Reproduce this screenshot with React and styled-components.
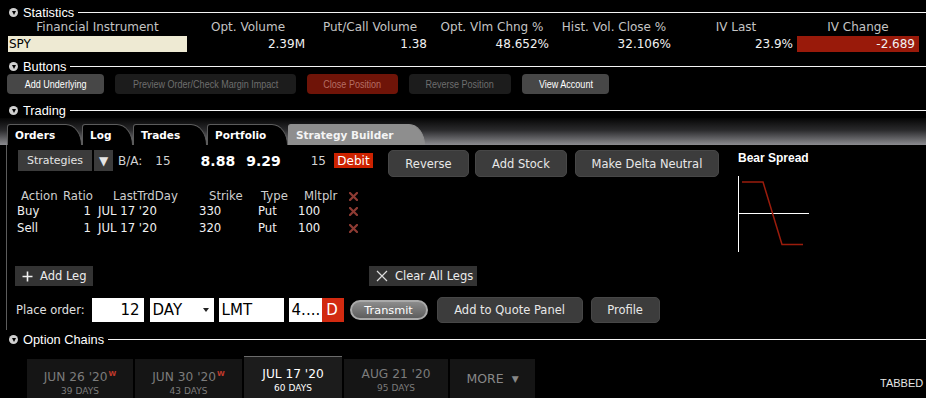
import React from 'react';
import styled, { createGlobalStyle } from 'styled-components';

const GlobalStyle = createGlobalStyle`
  html, body {
    margin: 0;
    padding: 0;
    background: #000;
    overflow: hidden;
  }
  body {
    font-family: "DejaVu Sans", sans-serif;
    color: #eee;
  }
`;

const Page = styled.div`
  width: 926px;
  height: 398px;
  padding-top: 4px;
  box-sizing: border-box;
  overflow: hidden;
  background: #000;
`;

/* ---------- section headers ---------- */

const SectionHead = styled.div`
  display: flex;
  align-items: center;
  height: 16px;
  padding-left: 9px;
  margin-top: ${p => p.$top || 0}px;
`;

const Toggle = styled.span`
  flex: none;
  width: 9px;
  height: 9px;
  border-radius: 50%;
  background: #d0d0d0;
  margin-right: 5px;
  display: flex;
  align-items: center;
  justify-content: center;
  &::after {
    content: '';
    margin-top: 1px;
    border-left: 2.5px solid transparent;
    border-right: 2.5px solid transparent;
    border-top: 4px solid #000;
  }
`;

const SectionTitle = styled.span`
  font-family: "Liberation Sans", sans-serif;
  font-size: 12.8px;
  color: #fff;
  margin-right: 4px;
  white-space: nowrap;
`;

const Rule = styled.span`
  flex: 1;
  height: 1px;
  background: #f4f4f4;
`;

function Section({ title, top }) {
  return (
    <SectionHead $top={top}>
      <Toggle />
      <SectionTitle>{title}</SectionTitle>
      <Rule />
    </SectionHead>
  );
}

/* ---------- statistics ---------- */

const StatsGrid = styled.div`
  display: grid;
  grid-template-columns: 179px repeat(6, 122px);
  margin-left: 8px;
  font-size: 12px;
`;

const StatHead = styled.div`
  height: 15px;
  line-height: 15px;
  text-align: center;
  color: #c4c4c4;
  white-space: nowrap;
`;

const StatVal = styled.div`
  height: 16px;
  line-height: 16px;
  margin-top: 1px;
  padding: 0 4px 0 1px;
  text-align: ${p => (p.$left ? 'left' : 'right')};
  background: ${p => p.$bg || 'transparent'};
  color: ${p => p.$color || '#f2f2f2'};
  white-space: nowrap;
`;

/* ---------- buttons row ---------- */

const ButtonRow = styled.div`
  display: flex;
  gap: 11px;
  height: 20px;
  margin-left: 7px;
`;

const SmallButton = styled.div`
  box-sizing: border-box;
  width: ${p => p.$w}px;
  height: 20px;
  border-radius: 4px;
  display: flex;
  align-items: center;
  justify-content: center;
  white-space: nowrap;
  background: ${p => (p.$tone === 'on' ? '#474747' : p.$tone === 'red' ? '#6f1408' : '#1c1c1c')};
  color: ${p => (p.$tone === 'on' ? '#fff' : p.$tone === 'red' ? '#b56e64' : '#6e6e6e')};
`;

/* the panel font is a condensed face: squeeze a regular one */
const Condensed = styled.span`
  display: inline-block;
  font-family: "Liberation Sans", sans-serif;
  font-size: 11px;
  transform: scaleX(0.82);
`;

/* ---------- trading tabs ---------- */

const TabBar = styled.div`
  height: 27px;
  padding-left: 7px;
  display: flex;
  align-items: flex-end;
  background: linear-gradient(to bottom, #050505 0%, #2a2a2c 45%, #8c8c90 100%);
`;

const TradeTab = styled.div`
  box-sizing: border-box;
  width: ${p => p.$w}px;
  height: 21px;
  padding-left: 7px;
  display: flex;
  align-items: center;
  font-weight: bold;
  font-size: 10.5px;
  white-space: nowrap;
  color: ${p => (p.$active ? '#f4f4f4' : '#fff')};
  background: ${p => (p.$active ? '#8e8e8e' : '#000')};
  border: 1px solid ${p => (p.$active ? '#8e8e8e' : '#5c5c5c')};
  border-bottom: none;
  border-radius: 3px 16px 0 0 / 3px 21px 0 0;
`;

/* ---------- trading panel ---------- */

const Panel = styled.div`
  box-sizing: border-box;
  height: 185px;
  margin-left: 6px;
  border-left: 1px solid #5c5c5c;
  padding: 5px 0 0 11px;
  display: flex;
`;

const Main = styled.div`
  width: 709px;
  display: flex;
  flex-direction: column;
`;

const StrategyRow = styled.div`
  display: flex;
  align-items: flex-start;
  height: 27px;
`;

const QuoteGroup = styled.div`
  display: flex;
  align-items: center;
  height: 21px;
`;

const DarkBox = styled.div`
  box-sizing: border-box;
  width: ${p => p.$w}px;
  height: 21px;
  margin-left: ${p => p.$ml || 0}px;
  background: #3b3b3b;
  color: #e4e4e4;
  font-size: ${p => p.$fs || 11}px;
  display: flex;
  align-items: center;
  justify-content: center;
`;

const Quote = styled.span`
  margin-left: ${p => p.$ml || 0}px;
  font-size: ${p => (p.$big ? 14 : 12)}px;
  font-weight: ${p => (p.$big ? 'bold' : 'normal')};
  color: ${p => (p.$big ? '#fff' : '#d2d2d2')};
  white-space: nowrap;
`;

const DebitTag = styled.span`
  margin-left: 8px;
  width: 39px;
  height: 15px;
  background: #cc2200;
  color: #fff;
  font-size: 12px;
  display: flex;
  align-items: center;
  justify-content: center;
`;

const ActionButton = styled.div`
  box-sizing: border-box;
  width: ${p => p.$w}px;
  height: ${p => p.$h || 27}px;
  margin-left: ${p => p.$ml || 0}px;
  border-radius: 5px;
  background: #3c3c3c;
  border: 1px solid #474747;
  color: #e8e8e8;
  font-size: 11.5px;
  display: flex;
  align-items: center;
  justify-content: center;
  white-space: nowrap;
`;

const LegsGrid = styled.div`
  display: grid;
  grid-template-columns: 46px 32px 101px 59px 40px 52px 14px;
  grid-template-rows: 14px 17px 17px;
  margin: 12px 0 0 -1px;
  font-size: 11.7px;
  color: #f0f0f0;
`;

const LegHead = styled.div`
  line-height: 14px;
  padding-left: ${p => p.$pl || 0}px;
  color: #cfcfcf;
  white-space: nowrap;
  display: flex;
  align-items: center;
`;

const LegCell = styled.div`
  line-height: 17px;
  padding-left: ${p => p.$pl || 0}px;
  padding-right: ${p => p.$pr || 0}px;
  white-space: nowrap;
  display: flex;
  align-items: center;
  justify-content: ${p => (p.$right ? 'flex-end' : 'flex-start')};
`;

const RemoveX = () => (
  <svg width="9" height="9" viewBox="0 0 9 9">
    <path d="M1 1L8 8M8 1L1 8" stroke="#8e3b33" strokeWidth="2.2" strokeLinecap="square" />
  </svg>
);

const LegButtons = styled.div`
  display: flex;
  height: 20px;
  margin: 29px 0 0 -3px;
`;

const LegButton = styled.div`
  box-sizing: border-box;
  width: ${p => p.$w}px;
  height: 20px;
  margin-left: ${p => p.$ml || 0}px;
  background: #333;
  color: #ececec;
  font-size: 11.5px;
  display: flex;
  align-items: center;
  padding-left: 7px;
  gap: 7px;
  white-space: nowrap;
`;

const OrderRow = styled.div`
  display: flex;
  align-items: center;
  height: 26px;
  margin: 11px 0 0 -2px;
`;

const OrderLabel = styled.span`
  font-size: 11.5px;
  color: #e0e0e0;
  margin-right: 7px;
  white-space: nowrap;
`;

const Field = styled.div`
  box-sizing: border-box;
  position: relative;
  width: ${p => p.$w}px;
  height: 24px;
  margin-left: ${p => p.$ml || 0}px;
  background: ${p => p.$bg || '#fff'};
  color: ${p => p.$color || '#000'};
  font-size: 15px;
  display: flex;
  align-items: center;
  justify-content: ${p => (p.$align === 'right' ? 'flex-end' : p.$align === 'center' ? 'center' : 'flex-start')};
  padding: 0 4px 0 3px;
  white-space: nowrap;
  overflow: hidden;
`;

const Caret = styled.span`
  position: absolute;
  right: 5px;
  top: 10px;
  border-left: 3px solid transparent;
  border-right: 3px solid transparent;
  border-top: 4px solid #222;
`;

const Transmit = styled.div`
  box-sizing: border-box;
  width: 78px;
  height: 20px;
  margin-left: 6px;
  border-radius: 10px;
  border: 2px solid #a9a9a9;
  background: linear-gradient(to bottom, #8c8c8c, #5d5d5d);
  color: #fff;
  font-size: 11.3px;
  display: flex;
  align-items: center;
  justify-content: center;
`;

const ChartCol = styled.div`
  padding-top: 1px;
  margin-left: 11px;
  display: flex;
  flex-direction: column;
`;

const ChartTitle = styled.div`
  font-family: "Liberation Sans", sans-serif;
  font-weight: bold;
  font-size: 12px;
  line-height: 14px;
  color: #fff;
  white-space: nowrap;
`;

const ChartBox = styled.svg`
  margin-top: 11px;
`;

/* ---------- option chains ---------- */

const ChainRow = styled.div`
  display: flex;
  align-items: flex-end;
  height: 42px;
  margin: 9px 0 0 27px;
`;

const ChainTab = styled.div`
  box-sizing: border-box;
  width: ${p => p.$w}px;
  height: ${p => (p.$active ? 42 : 39)}px;
  margin-right: 2px;
  background: ${p => (p.$active ? '#1c1c1c' : '#151515')};
  border-top: ${p => (p.$active ? '1px solid #6c6c6c' : 'none')};
  padding-top: ${p => (p.$active ? 10 : 8)}px;
  display: flex;
  flex-direction: column;
  align-items: center;
  color: ${p => (p.$active ? '#fff' : '#7c7c7c')};
`;

const ChainDate = styled.div`
  font-size: 12.2px;
  line-height: 14px;
  white-space: nowrap;
`;

const WeeklyMark = styled.sup`
  font-size: 7px;
  font-weight: bold;
  color: #c0392b;
  vertical-align: 5px;
  margin-left: 1px;
`;

const ChainDays = styled.div`
  font-size: 9px;
  line-height: 11px;
  margin-top: 2px;
  white-space: nowrap;
`;

const MoreTab = styled.div`
  box-sizing: border-box;
  width: 85px;
  height: 39px;
  background: #151515;
  color: #888;
  font-size: 12.5px;
  display: flex;
  align-items: center;
  justify-content: center;
  gap: 8px;
`;

const Tabbed = styled.div`
  margin-left: auto;
  align-self: flex-start;
  margin-top: 21px;
  width: 46px;
  overflow: hidden;
  white-space: nowrap;
  font-family: "Liberation Sans", sans-serif;
  font-size: 11px;
  line-height: 12px;
  color: #e6e6e6;
`;

const stats = [
  ['Financial Instrument', 'SPY'],
  ['Opt. Volume', '2.39M'],
  ['Put/Call Volume', '1.38'],
  ['Opt. Vlm Chng %', '48.652%'],
  ['Hist. Vol. Close %', '32.106%'],
  ['IV Last', '23.9%'],
  ['IV Change', '-2.689'],
];

const legs = [
  ['Buy', '1', "JUL 17 '20", '330', 'Put', '100'],
  ['Sell', '1', "JUL 17 '20", '320', 'Put', '100'],
];

const chains = [
  { date: "JUN 26 '20", days: '39 DAYS', weekly: true, w: 106 },
  { date: "JUN 30 '20", days: '43 DAYS', weekly: true, w: 107 },
  { date: "JUL 17 '20", days: '60 DAYS', active: true, w: 98 },
  { date: "AUG 21 '20", days: '95 DAYS', w: 104 },
];

export default function App() {
  return (
    <Page>
      <GlobalStyle />
      <Section title="Statistics" />
      <StatsGrid>
        {stats.map(([h]) => (
          <StatHead key={h}>{h}</StatHead>
        ))}
        {stats.map(([h, v], i) => (
          <StatVal
            key={h + v}
            $left={i === 0}
            $bg={i === 0 ? '#eeead3' : i === 6 ? '#991a0a' : undefined}
            $color={i === 0 ? '#000' : undefined}
          >
            {v}
          </StatVal>
        ))}
      </StatsGrid>

      <Section title="Buttons" top={6} />
      <ButtonRow>
        <SmallButton $w={97} $tone="on"><Condensed>Add Underlying</Condensed></SmallButton>
        <SmallButton $w={181}><Condensed>Preview Order/Check Margin Impact</Condensed></SmallButton>
        <SmallButton $w={91} $tone="red"><Condensed>Close Position</Condensed></SmallButton>
        <SmallButton $w={102}><Condensed>Reverse Position</Condensed></SmallButton>
        <SmallButton $w={87} $tone="on"><Condensed>View Account</Condensed></SmallButton>
      </ButtonRow>

      <Section title="Trading" top={8} />
      <TabBar>
        <TradeTab $w={75}>Orders</TradeTab>
        <TradeTab $w={51}>Log</TradeTab>
        <TradeTab $w={74}>Trades</TradeTab>
        <TradeTab $w={81}>Portfolio</TradeTab>
        <TradeTab $w={137} $active>Strategy Builder</TradeTab>
      </TabBar>

      <Panel>
        <Main>
          <StrategyRow>
            <QuoteGroup>
              <DarkBox $w={74}>Strategies</DarkBox>
              <DarkBox $w={19} $ml={2} $fs={12}>▼</DarkBox>
              <Quote $ml={5}>B/A:</Quote>
              <Quote $ml={13}>15</Quote>
              <Quote $ml={30} $big>8.88</Quote>
              <Quote $ml={11} $big>9.29</Quote>
              <Quote $ml={30}>15</Quote>
              <DebitTag>Debit</DebitTag>
            </QuoteGroup>
            <ActionButton $w={81} $ml={15}>Reverse</ActionButton>
            <ActionButton $w={92} $ml={6}>Add Stock</ActionButton>
            <ActionButton $w={144} $ml={8}>Make Delta Neutral</ActionButton>
          </StrategyRow>

          <LegsGrid>
            <LegHead $pl={4}>Action</LegHead>
            <LegHead>Ratio</LegHead>
            <LegHead $pl={18}>LastTrdDay</LegHead>
            <LegHead $pl={13}>Strike</LegHead>
            <LegHead $pl={6}>Type</LegHead>
            <LegHead $pl={9}>Mltplr</LegHead>
            <LegHead $pl={2}><RemoveX /></LegHead>
            {legs.map(row => (
              <React.Fragment key={row[0]}>
                <LegCell>{row[0]}</LegCell>
                <LegCell $right $pr={4}>{row[1]}</LegCell>
                <LegCell $pl={3}>{row[2]}</LegCell>
                <LegCell $pl={3}>{row[3]}</LegCell>
                <LegCell $pl={3}>{row[4]}</LegCell>
                <LegCell $pl={3}>{row[5]}</LegCell>
                <LegCell $pl={2}><RemoveX /></LegCell>
              </React.Fragment>
            ))}
          </LegsGrid>

          <LegButtons>
            <LegButton $w={78}>
              <svg width="11" height="11" viewBox="0 0 11 11">
                <path d="M5.5 0.5V10.5M0.5 5.5H10.5" stroke="#f0f0f0" strokeWidth="1.6" />
              </svg>
              Add Leg
            </LegButton>
            <LegButton $w={108} $ml={276}>
              <svg width="12" height="12" viewBox="0 0 12 12">
                <path d="M1 1L11 11M11 1L1 11" stroke="#dcdcdc" strokeWidth="1.2" />
              </svg>
              Clear All Legs
            </LegButton>
          </LegButtons>

          <OrderRow>
            <OrderLabel>Place order:</OrderLabel>
            <Field $w={52} $align="right">12</Field>
            <Field $w={64} $ml={6}>
              DAY
              <Caret />
            </Field>
            <Field $w={65} $ml={5}>LMT</Field>
            <Field $w={33} $ml={5}>4....</Field>
            <Field $w={22} $bg="#d22a10" $color="#fff" $align="center">D</Field>
            <Transmit>Transmit</Transmit>
            <ActionButton $w={146} $h={26} $ml={9}>Add to Quote Panel</ActionButton>
            <ActionButton $w={69} $h={26} $ml={8}>Profile</ActionButton>
          </OrderRow>
        </Main>

        <ChartCol>
          <ChartTitle>Bear Spread</ChartTitle>
          <ChartBox width="72" height="76" viewBox="0 0 72 76">
            <path d="M0.5 0V76M0 37.5H71" stroke="#fff" strokeWidth="1" fill="none" />
            <path d="M4 6H25L44 68.5H65" stroke="#9b1c0c" strokeWidth="1.5" fill="none" />
          </ChartBox>
        </ChartCol>
      </Panel>

      <Section title="Option Chains" top={1} />
      <ChainRow>
        {chains.map(c => (
          <ChainTab key={c.date} $w={c.w} $active={c.active}>
            <ChainDate>
              {c.date}
              {c.weekly && <WeeklyMark>W</WeeklyMark>}
            </ChainDate>
            <ChainDays>{c.days}</ChainDays>
          </ChainTab>
        ))}
        <MoreTab>
          MORE
          <span style={{ fontSize: 9 }}>▼</span>
        </MoreTab>
        <Tabbed>TABBED VIEW</Tabbed>
      </ChainRow>
    </Page>
  );
}
